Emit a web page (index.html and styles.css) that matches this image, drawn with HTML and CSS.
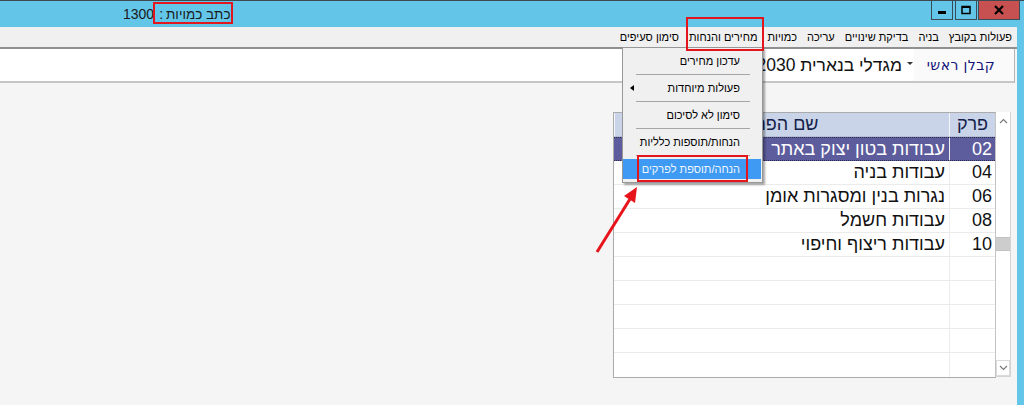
FILE: index.html
```html
<!DOCTYPE html>
<html lang="he">
<head>
<meta charset="utf-8">
<title>כתב כמויות</title>
<link rel="stylesheet" href="styles.css">
</head>
<body>
<div class="window">
  <header class="titlebar">
    <div class="title"><span class="title-num">1300</span><span class="title-sep">:</span><span class="title-name">כתב כמויות</span></div>
    <div class="winbtns">
      <div class="wbtn wmin"><svg width="10" height="10" viewBox="0 0 10 10"><rect x="1" y="6" width="8" height="3" fill="#000"/></svg></div>
      <div class="wbtn wmax"><svg width="10" height="10" viewBox="0 0 10 10"><rect x="1" y="1.5" width="8" height="7" fill="none" stroke="#000" stroke-width="1.5"/><rect x="1" y="1" width="8" height="2" fill="#000"/></svg></div>
      <div class="wbtn wclose"><svg width="12" height="10" viewBox="0 0 12 10"><path d="M2 1 L10 9 M10 1 L2 9" stroke="#000" stroke-width="2.2"/></svg></div>
    </div>
  </header>
  <div class="frame">
    <div class="main">
      <nav class="menubar">
        <span class="mitem">פעולות בקובץ</span>
        <span class="mitem">בניה</span>
        <span class="mitem">בדיקת שינויים</span>
        <span class="mitem">עריכה</span>
        <span class="mitem">כמויות</span>
        <span class="mitem">מחירים והנחות</span>
        <span class="mitem">סימון סעיפים</span>
      </nav>
      <div class="toolbar">
        <div class="contractor">קבלן ראשי</div>
        <span class="caret"></span>
        <div class="project">מגדלי בנארית 2030</div>
      </div>
      <section class="content">
        <div class="gridwrap">
          <div class="grid">
            <div class="hcell">פרק</div>
            <div class="hcell">שם הפרק</div>
            <div class="cell num sel">02</div>
            <div class="cell name sel">עבודות בטון יצוק באתר</div>
            <div class="cell num">04</div>
            <div class="cell name">עבודות בניה</div>
            <div class="cell num">06</div>
            <div class="cell name">נגרות בנין ומסגרות אומן</div>
            <div class="cell num">08</div>
            <div class="cell name">עבודות חשמל</div>
            <div class="cell num">10</div>
            <div class="cell name">עבודות ריצוף וחיפוי</div>
            <div class="cell num"></div><div class="cell name"></div>
            <div class="cell num"></div><div class="cell name"></div>
            <div class="cell num"></div><div class="cell name"></div>
            <div class="cell num"></div><div class="cell name"></div>
            <div class="cell num last"></div><div class="cell name last"></div>
          </div>
          <div class="scrollbar">
            <div class="sbtn up"><svg width="9" height="6" viewBox="0 0 9 6"><path d="M1 5 L4.5 1.5 L8 5" fill="none" stroke="#7a7a7a" stroke-width="1.2"/></svg></div>
            <div class="track"><div class="thumb"></div></div>
            <div class="sbtn down"><svg width="9" height="6" viewBox="0 0 9 6"><path d="M1 1 L4.5 4.5 L8 1" fill="none" stroke="#7a7a7a" stroke-width="1.2"/></svg></div>
          </div>
        </div>
      </section>
    </div>
    <div class="frame-right"></div>
  </div>

  <div class="dropdown">
    <div class="mi">עדכון מחירים</div>
    <div class="msep"></div>
    <div class="mi sub"><span>פעולות מיוחדות</span><span class="subarrow"></span></div>
    <div class="msep"></div>
    <div class="mi">סימון לא לסיכום</div>
    <div class="msep"></div>
    <div class="mi">הנחות/תוספות כלליות</div>
    <div class="msep"></div>
    <div class="mi active">הנחה/תוספת לפרקים</div>
  </div>

  <div class="mark mark-title"></div>
  <div class="mark mark-menu"></div>
  <div class="mark mark-item"></div>
  <svg class="arrow" width="1024" height="405" viewBox="0 0 1024 405">
    <line x1="597" y1="252" x2="630" y2="199" stroke="#E8141B" stroke-width="3"/>
    <polygon points="637,187 635,203 624,196" fill="#E8141B"/>
  </svg>
</div>
</body>
</html>
```

FILE: styles.css
```css
* { box-sizing: border-box; }

body {
  margin: 0;
  width: 1024px;
  height: 405px;
  overflow: hidden;
  background: #F5F5F5;
  font-family: "Liberation Sans", "DejaVu Sans", sans-serif;
  color: #111;
}

.window {
  position: relative;
  width: 1024px;
  height: 405px;
  display: flex;
  flex-direction: column;
}

/* title bar */
.titlebar {
  height: 27px;
  flex: none;
  background: #63C6E9;
  border-top: 1px solid #3d4a52;
  display: flex;
  align-items: flex-start;
}
.title {
  flex: 1;
  display: flex;
  align-items: center;
  height: 26px;
  padding-left: 123px;
  font-size: 14px;
  color: #1a1a1a;
}
.title-sep { margin: 0 3px 0 5px; }
.title-name { direction: rtl; font-size: 13.5px; }

.winbtns {
  display: flex;
  margin-right: 4px;
  gap: 2px;
}
.wbtn {
  height: 19px;
  border: 1px solid #3a4b55;
  border-top: none;
  display: flex;
  align-items: center;
  justify-content: center;
}
.wmin, .wmax { width: 22px; background: #63C6E9; }
.wclose { width: 42px; background: #C75050; margin-left: -1px; }

/* frame */
.frame {
  flex: 1;
  display: flex;
  min-height: 0;
}
.main {
  flex: 1;
  display: flex;
  flex-direction: column;
  min-width: 0;
}
.frame-right {
  width: 7px;
  background: #63C6E9;
}

/* menu bar */
.menubar {
  height: 22px;
  flex: none;
  background: #F0F0F0;
  border-bottom: 2px solid #8f8f8f;
  direction: rtl;
  display: flex;
  align-items: center;
  font-size: 11px;
  color: #000;
}
.mitem {
  padding: 0 5px;
  white-space: nowrap;
}
.mitem.priced { padding-left: 6px; }

/* toolbar */
.toolbar {
  height: 34px;
  flex: none;
  background: #fff;
  border-bottom: 2px solid #C6C6C6;
  border-right: 1px solid #B4B4B4;
  margin-right: 2px;
  direction: rtl;
  display: flex;
  align-items: center;
}
.contractor {
  width: 100px;
  height: 100%;
  padding-right: 19px;
  display: flex;
  align-items: center;
  background: #FAFAFA;
  font-family: "DejaVu Sans", "Liberation Sans", sans-serif;
  font-size: 14px;
  letter-spacing: 0.4px;
  color: #12127a;
  white-space: nowrap;
}
.caret {
  width: 0;
  height: 0;
  border-left: 3px solid transparent;
  border-right: 3px solid transparent;
  border-top: 3px solid #333;
  margin: 0 1px 0 5px;
  position: relative;
  top: -2px;
}
.project {
  font-size: 17.5px;
  color: #111;
  white-space: nowrap;
}

/* content */
.content {
  flex: 1;
  padding: 29px 0 0 613px;
}
.gridwrap {
  display: flex;
  width: 398px;
  height: 266px;
}
.grid {
  width: 383px;
  direction: rtl;
  display: grid;
  grid-template-columns: 46px 1fr;
  grid-template-rows: repeat(11, 24px);
  border: 1px solid #ABABAB;
  border-right: 1px solid #C4C4C4;
  background: #fff;
}
.hcell {
  background: #C9D4E8;
  border-bottom: 1px solid #B5C0D4;
  border-left: 1px solid #f4f6fb;
  font-size: 18px;
  color: #14204a;
  display: flex;
  align-items: center;
  justify-content: center;
  white-space: nowrap;
  overflow: hidden;
}
.cell {
  border-bottom: 1px solid #EBEBEB;
  font-size: 18px;
  display: flex;
  align-items: center;
  white-space: nowrap;
  overflow: hidden;
  color: #111;
}
.cell.last { border-bottom: none; }
.cell.num {
  border-left: 1px solid #EDEDED;
  padding-right: 3px;
}
.cell.name { padding-right: 4px; }
.cell.sel {
  background: #5D5D9D;
  color: #fff;
  border-top: 1px dotted #2a2a50;
  border-bottom: 1px dotted #2a2a50;
}

.scrollbar {
  width: 15px;
  background: #fff;
  border-right: 1px solid #D4D4D4;
  border-bottom: 1px solid #D4D4D4;
  display: flex;
  flex-direction: column;
  height: 265px;
}
.sbtn {
  height: 17px;
  flex: none;
  display: flex;
  align-items: center;
  justify-content: center;
}
.sbtn.down {
  border: 1px solid #DADADA;
  height: 16px;
}
.track {
  flex: 1;
  padding-top: 108px;
}
.thumb {
  height: 14px;
  background: #CDCDCD;
  border-top: 1px solid #C2C2C2;
  border-bottom: 1px solid #C2C2C2;
}

/* dropdown */
.dropdown {
  position: absolute;
  left: 622px;
  top: 47px;
  width: 141px;
  height: 136px;
  background: #F0F0F0;
  border: 1px solid #979797;
  box-shadow: 2px 2px 2px rgba(0, 0, 0, 0.35);
  direction: rtl;
  display: flex;
  flex-direction: column;
  font-size: 11px;
  color: #000;
}
.mi {
  height: 26px;
  flex: none;
  padding-right: 22px;
  display: flex;
  align-items: center;
  white-space: nowrap;
}
.mi.sub {
  justify-content: space-between;
  padding-left: 7px;
}
.subarrow {
  width: 0;
  height: 0;
  border-top: 3px solid transparent;
  border-bottom: 3px solid transparent;
  border-right: 4px solid #000;
}
.mi.active {
  height: 20px;
  margin: 3px 1px 0 0;
  padding-right: 21px;
  background: #3E9AF2;
  color: #F2F7FF;
}
.msep {
  height: 1px;
  flex: none;
  margin: 0 12px 0 13px;
  background: #A6A6A6;
}

/* annotations */
.mark {
  position: absolute;
  border: 2px solid #E4161D;
}
.mark-title { left: 153px; top: 2px; width: 80px; height: 22px; }
.mark-menu { left: 686px; top: 17px; width: 78px; height: 34px; }
.mark-item { left: 637px; top: 155px; width: 111px; height: 27px; }

.arrow {
  position: absolute;
  left: 0;
  top: 0;
  pointer-events: none;
}
```
